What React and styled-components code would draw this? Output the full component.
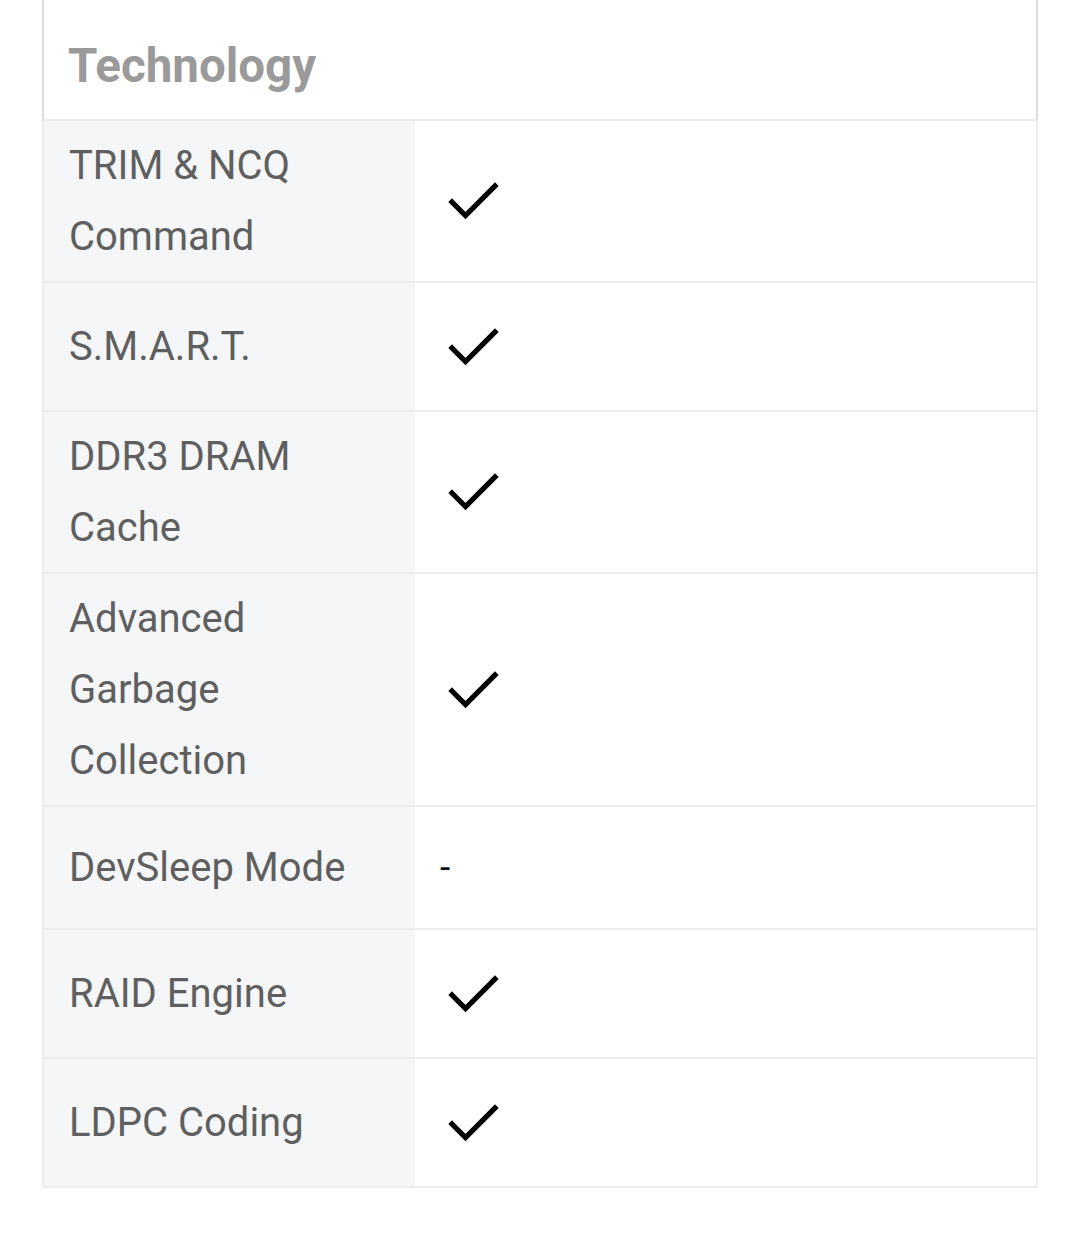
import React from "react";
import styled, { createGlobalStyle } from "styled-components";

const Global = createGlobalStyle`
  html, body { margin: 0; padding: 0; background: #fff; }
  body { font-family: Roboto, "Noto Sans", "Liberation Sans", sans-serif; }
`;

const Page = styled.div`
  padding: 0 42px 44px 42px;
`;

const Table = styled.div`
  display: flex;
  flex-direction: column;
`;

const Header = styled.div`
  height: 121px;
  box-sizing: border-box;
  padding: 13px 24px 0;
  display: flex;
  align-items: center;
  border-left: 2px solid #dedede;
  border-right: 2px solid #dedede;
  border-bottom: 2px solid #ececec;
  font-size: 47.5px;
  font-weight: 700;
  color: #9a9a9a;
`;

const Row = styled.div`
  display: grid;
  grid-template-columns: 371px 1fr;
  border-left: 2px solid #ececec;
  border-right: 2px solid #ececec;
  border-bottom: 2px solid #ececec;
`;

const Label = styled.div`
  display: flex;
  align-items: center;
  background: #f5f6f8;
  padding: 9px 26px 9px 25px;
  font-size: 40px;
  line-height: 71px;
  color: #5f5f5f;
`;

const Value = styled.div`
  display: flex;
  align-items: center;
  padding: 25px 25px;
  background: #fff;
  font-size: 37px;
  line-height: 71px;
  color: #111;
`;

const CheckBox = styled.span`
  display: flex;
  align-items: center;
  height: 77px;
  padding-left: 8px;
`;

const Check = () => (
  <CheckBox>
    <svg width="52" height="42" viewBox="0 0 52 42">
      <polyline
        points="4,22 17.5,35.5 47,6"
        fill="none"
        stroke="#000"
        strokeWidth="5.2"
        strokeLinecap="square"
      />
    </svg>
  </CheckBox>
);

const rows = [
  ["TRIM & NCQ Command", true],
  ["S.M.A.R.T.", true],
  ["DDR3 DRAM Cache", true],
  ["Advanced Garbage Collection", true],
  ["DevSleep Mode", false],
  ["RAID Engine", true],
  ["LDPC Coding", true],
];

export default function App() {
  return (
    <>
      <Global />
      <Page>
        <Table>
          <Header>Technology</Header>
          {rows.map(([label, ok]) => (
            <Row key={label}>
              <Label>{label}</Label>
              <Value>{ok ? <Check /> : "-"}</Value>
            </Row>
          ))}
        </Table>
      </Page>
    </>
  );
}
